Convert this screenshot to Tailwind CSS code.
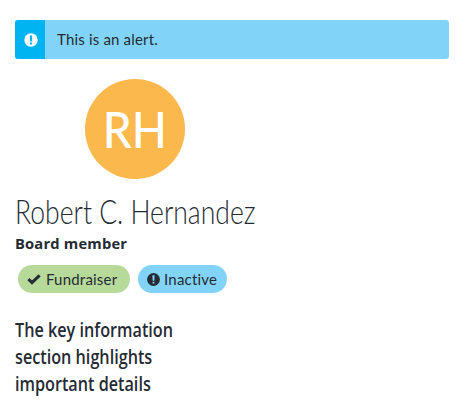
<!DOCTYPE html>
<html lang="en">
<head>
<meta charset="utf-8">
<title>Constituent summary</title>
<script src="https://cdn.jsdelivr.net/npm/@tailwindcss/browser@4"></script>
</head>
<body class="bg-white px-[15px] pt-5 font-['Lato',sans-serif] text-[15px] text-[#252b33]">
<div class="flex h-[39px] w-[434px] overflow-hidden rounded-[3px] bg-[#81d4f7]" role="alert">
  <div class="flex w-[30px] items-center justify-center bg-[#00b4f1]">
    <svg class="mt-px ml-px size-[14px]" viewBox="0 0 14 14"><circle cx="7" cy="7" r="6.7" fill="#fff"/><path d="M5.8 2.5h2.4l-.3 5.9H6.1zM6 9.4h2v2H6z" fill="#00b4f1"/></svg>
  </div>
  <p class="pl-3 leading-[39px] tracking-[0.18px]">This is an alert.</p>
</div>
<div class="mt-5 ml-[70px] flex size-[100px] items-center justify-center rounded-full bg-[#fbb84c] text-[50px] leading-[100px] text-white"><span class="inline-block origin-center scale-x-[0.92] font-medium">RH</span></div>
<h1 class="mt-3 w-max origin-left scale-x-[0.78] text-[34px] leading-[40px] font-light whitespace-nowrap">Robert C. Hernandez</h1>
<p class="mt-0.5 w-max origin-left scale-x-[0.98] font-['Open_Sans',sans-serif] text-[15px] leading-5 font-bold tracking-[0.2px]">Board member</p>
<div class="mt-3 ml-[3px] flex gap-2">
  <span class="flex h-7 w-28 items-center rounded-full bg-[#b7da9b] pl-[9px] tracking-[0.2px]"><svg class="mr-[5px] h-[14px] w-[14px] shrink-0" viewBox="0 0 14 14"><path d="M1.4 7.2l3.6 3.4 7.6-7.3" fill="none" stroke="#252b33" stroke-width="3"/></svg>Fundraiser</span>
  <span class="flex h-7 w-[89px] items-center rounded-full bg-[#81d4f7] pl-[9px] tracking-[0.22px]"><svg class="mr-1 size-[13px] shrink-0" viewBox="0 0 14 14"><circle cx="7" cy="7" r="6.9" fill="#252b33"/><path d="M5.8 2.5h2.4l-.3 5.9H6.1zM6 9.4h2v2H6z" fill="#81d4f7"/></svg>Inactive</span>
</div>
<p class="mt-[23px] w-max origin-left scale-x-[0.81] font-['Open_Sans',sans-serif] text-[20px] leading-[27px] font-semibold">The key information<br>section highlights<br>important details</p>
</body>
</html>
